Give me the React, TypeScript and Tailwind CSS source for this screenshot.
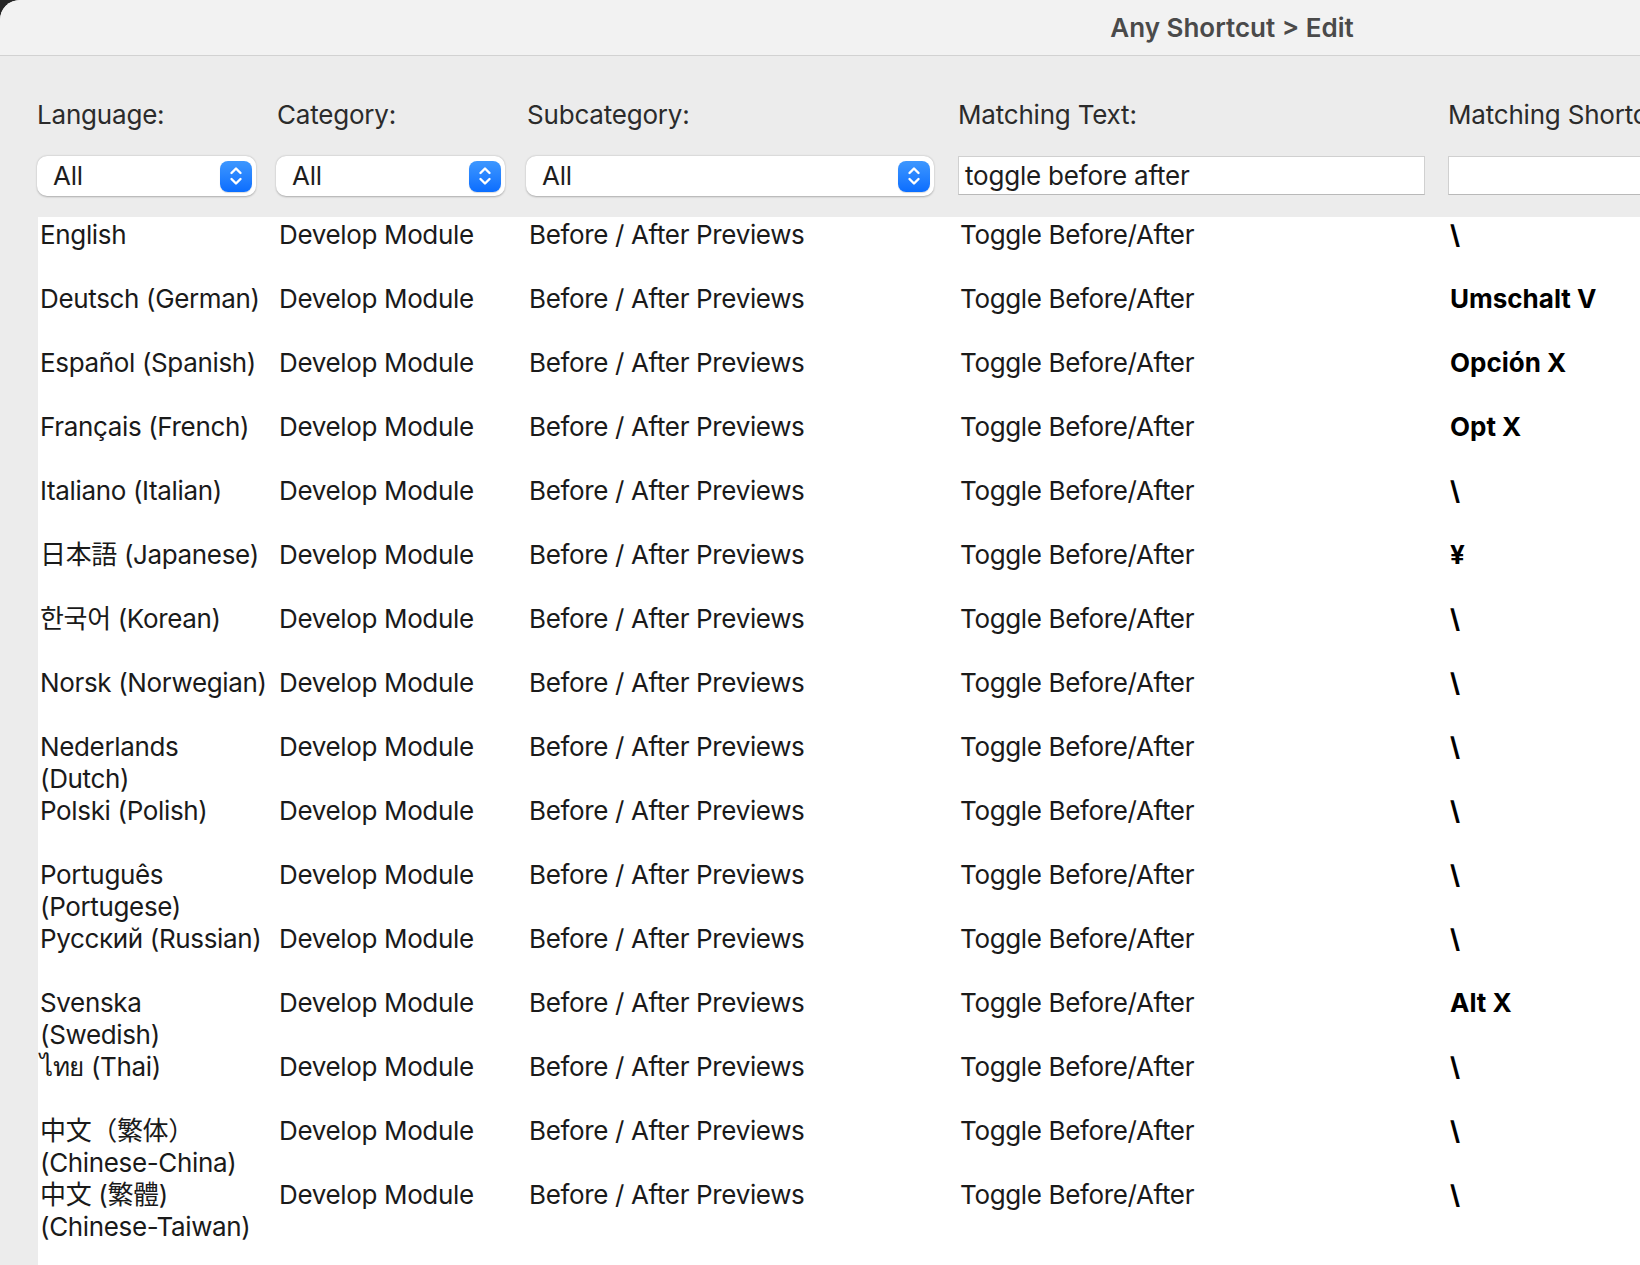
import React from "react";

type Row = { lang: string[]; key: string };

const rows: Row[] = [
  { lang: ["English"], key: "\\" },
  { lang: ["Deutsch (German)"], key: "Umschalt V" },
  { lang: ["Español (Spanish)"], key: "Opción X" },
  { lang: ["Français (French)"], key: "Opt X" },
  { lang: ["Italiano (Italian)"], key: "\\" },
  { lang: ["日本語 (Japanese)"], key: "¥" },
  { lang: ["한국어 (Korean)"], key: "\\" },
  { lang: ["Norsk (Norwegian)"], key: "\\" },
  { lang: ["Nederlands", "(Dutch)"], key: "\\" },
  { lang: ["Polski (Polish)"], key: "\\" },
  { lang: ["Português", "(Portugese)"], key: "\\" },
  { lang: ["Русский (Russian)"], key: "\\" },
  { lang: ["Svenska", "(Swedish)"], key: "Alt X" },
  { lang: ["ไทย (Thai)"], key: "\\" },
  { lang: ["中文（繁体）", "(Chinese-China)"], key: "\\" },
  { lang: ["中文 (繁體)", "(Chinese-Taiwan)"], key: "\\" },
];

const font = {
  fontFamily:
    'Inter, "Noto Sans CJK JP", "Noto Sans CJK KR", "Noto Sans", "DejaVu Sans", sans-serif',
};

function Stepper() {
  return (
    <div className="w-[32px] h-[31px] rounded-[8px] bg-gradient-to-b from-[#3d97ff] to-[#0a6dff] flex items-center justify-center shadow-[0_1px_1px_rgba(0,0,0,0.15)]">
      <svg width="14" height="22" viewBox="0 0 14 22" fill="none">
        <path d="M2.5 8 L7 3.5 L11.5 8" stroke="white" strokeWidth="2.4" strokeLinecap="round" strokeLinejoin="round" />
        <path d="M2.5 14 L7 18.5 L11.5 14" stroke="white" strokeWidth="2.4" strokeLinecap="round" strokeLinejoin="round" />
      </svg>
    </div>
  );
}

function Select({ width }: { width: string }) {
  return (
    <div
      className={`${width} h-[40px] bg-white rounded-[10px] shadow-[0_0.5px_2px_rgba(0,0,0,0.28)] flex items-center justify-between pl-[16px] pr-[4px]`}
    >
      <span className="text-[26px] leading-[32px] text-[#1d1d1d]">All</span>
      <Stepper />
    </div>
  );
}

export default function App() {
  return (
    <div className="w-[1640px] h-[1265px] bg-[#262626] overflow-hidden" style={font}>
      <div className="h-full rounded-tl-[20px] bg-[#ececec] overflow-hidden flex flex-col">
        {/* title bar */}
        <div className="h-[56px] shrink-0 bg-[#f2f2f2] border-b border-[#d2d2d2] flex items-center justify-center pl-[824px]">
          <span className="text-[26px] font-semibold text-[#4a4a4a]">Any Shortcut &gt; Edit</span>
        </div>

        {/* filters */}
        <div className="pt-[43px] pl-[37px] grid grid-cols-[240px_250px_431px_490px_1fr] text-[26px] leading-[32px] tracking-[-0.2px] text-[#2b2b2b]">
          <div>Language:</div>
          <div>Category:</div>
          <div>Subcategory:</div>
          <div>Matching Text:</div>
          <div className="whitespace-nowrap">Matching Shortcut:</div>

          <div className="mt-[25px]"><Select width="w-[219px]" /></div>
          <div className="mt-[25px] -ml-[1px]"><Select width="w-[229px]" /></div>
          <div className="mt-[25px] -ml-[1px]"><Select width="w-[408px]" /></div>
          <div className="mt-[25px]">
            <div className="w-[467px] h-[39px] bg-white border border-[#d0d0d0] border-b-[#b9b9b9] flex items-center pl-[6px] text-[#1d1d1d]">
              toggle before after
            </div>
          </div>
          <div className="mt-[25px]">
            <div className="w-[400px] h-[39px] bg-white border border-[#d0d0d0] border-b-[#b9b9b9]" />
          </div>
        </div>

        {/* results table */}
        <div className="mt-[21px] ml-[38px] flex-1 bg-white pt-[2px]">
          {rows.map((r, i) => (
            <div
              key={i}
              className="h-[64px] pl-[2px] grid grid-cols-[239px_250px_431px_490px_1fr] text-[26px] leading-[32px] tracking-[-0.35px] text-[#1a1a1a]"
            >
              <div className="whitespace-nowrap">
                {r.lang.map((l, j) => (
                  <div key={j}>{l}</div>
                ))}
              </div>
              <div className="whitespace-nowrap">Develop Module</div>
              <div className="whitespace-nowrap">Before / After Previews</div>
              <div className="whitespace-nowrap">Toggle Before/After</div>
              <div className="whitespace-nowrap font-bold text-black tracking-normal">{r.key}</div>
            </div>
          ))}
        </div>
      </div>
    </div>
  );
}
